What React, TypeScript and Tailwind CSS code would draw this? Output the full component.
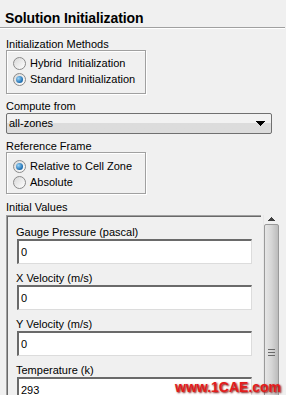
import React from "react";

const font = { fontFamily: '"Liberation Sans", Arial, sans-serif' };

function Radio({ checked, label }: { checked?: boolean; label: string }) {
  return (
    <div className="flex items-center h-[16px]">
      <div className="ml-[6px] w-[13px] h-[13px] rounded-full border border-[#8a8a8a] bg-gradient-to-br from-[#d8d8d8] to-[#ffffff] flex items-center justify-center">
        {checked && (
          <div className="w-[7px] h-[7px] rounded-full bg-[radial-gradient(circle_at_35%_35%,#9ad4f8,#1a6cb0_70%,#0e4f8a)]" />
        )}
      </div>
      <span className="ml-[4px] text-[11px] leading-[13px] text-black whitespace-pre">{label}</span>
    </div>
  );
}

function Field({ label, value }: { label: string; value: string }) {
  return (
    <div className="flex flex-col">
      <div className="h-[13px] text-[11px] leading-[13px] text-black ml-[8px]">{label}</div>
      <div className="ml-[9px] w-[235px] h-[25px] bg-white border-t-2 border-l-2 border-t-[#6a6a6a] border-l-[#6a6a6a] border-r border-b border-r-[#dcdcdc] border-b-[#dcdcdc] text-[11px] leading-[13px] pl-[2px] pt-[5px]">
        {value}
      </div>
    </div>
  );
}

export default function App() {
  return (
    <div style={font} className="w-[286px] h-[395px] overflow-hidden bg-[#f0f0f0] relative text-black">
      <div className="h-[27px] pl-[5px] pt-[10px] text-[14px] leading-[16px] font-bold tracking-[-0.1px]">
        Solution Initialization
      </div>
      <div className="w-[285px] h-px bg-[#a0a0a0]" />
      <div className="w-[285px] h-px bg-white" />

      <div className="ml-[6px] mt-[9px] h-[13px] text-[11px] leading-[13px]">Initialization Methods</div>
      <div className="ml-[6px] mt-[-1px] w-[140px] h-[44px] border border-[#a0a0a0] shadow-[1px_1px_0_#fff,inset_1px_1px_0_#fff] pt-[4px]">
        <Radio label="Hybrid  Initialization" />
        <Radio checked label="Standard Initialization" />
      </div>

      <div className="ml-[6px] mt-[6px] h-[13px] text-[11px] leading-[13px]">Compute from</div>
      <div className="ml-[6px] w-[266px] h-[21px] rounded-[2px] border border-[#707070] bg-gradient-to-b from-[#f2f2f2] from-45% to-[#dcdcdc] to-50% flex items-center justify-between pl-[2px] pr-[6px]">
        <span className="text-[11px] leading-[13px]">all-zones</span>
        <svg width="9" height="6" viewBox="0 0 9 6">
          <path d="M0 0h9v1H0zM1 1h7v1H1zM2 2h5v1H2zM3 3h3v1H3zM4 4h1v1H4z" fill="#000" />
        </svg>
      </div>

      <div className="ml-[6px] mt-[6px] h-[13px] text-[11px] leading-[13px]">Reference Frame</div>
      <div className="ml-[6px] mt-[-1px] w-[140px] h-[42px] border border-[#a0a0a0] shadow-[1px_1px_0_#fff,inset_1px_1px_0_#fff] pt-[5px]">
        <Radio checked label="Relative to Cell Zone" />
        <Radio label="Absolute" />
      </div>

      <div className="ml-[6px] mt-[7px] h-[13px] text-[11px] leading-[13px]">Initial Values</div>
      <div className="flex mt-px">
        <div className="ml-[6px] w-[255px] h-[200px] border-t border-l border-t-[#a0a0a0] border-l-[#a0a0a0]">
          <div className="h-full border-t border-l border-t-[#696969] border-l-[#696969] pt-[9px] flex flex-col gap-[8px]">
            <Field label="Gauge Pressure (pascal)" value="0" />
            <Field label="X Velocity (m/s)" value="0" />
            <Field label="Y Velocity (m/s)" value="0" />
            <Field label="Temperature (k)" value="293" />
          </div>
        </div>
        <div className="ml-[2px] w-[16px] h-[200px] flex flex-col bg-[#f0f0f0] border-l border-[#e8e8e8]">
          <div className="h-[15px] flex items-center justify-center">
            <svg width="7" height="4" viewBox="0 0 7 4">
              <path d="M3 0h1v1H3zM2 1h3v1H2zM1 2h5v1H1zM0 3h7v1H0z" fill="#404040" />
            </svg>
          </div>
          <div className="mt-px h-[250px] rounded-[2px] border border-[#9a9a9a] bg-gradient-to-r from-[#e6e6e6] via-[#d6d6d6] to-[#bcbcbc] flex flex-col items-center pt-[124px] gap-[2px]">
            <div className="w-[7px] h-px bg-[#6a6a6a]" />
            <div className="w-[7px] h-px bg-[#6a6a6a]" />
            <div className="w-[7px] h-px bg-[#6a6a6a]" />
          </div>
        </div>
      </div>

      <div className="absolute left-[175px] top-[379px] text-[14px] leading-[16px] font-bold text-[#e31c1c] pointer-events-none [text-shadow:1px_1px_2px_#7a1010]">
        www.1CAE.com
      </div>
    </div>
  );
}
